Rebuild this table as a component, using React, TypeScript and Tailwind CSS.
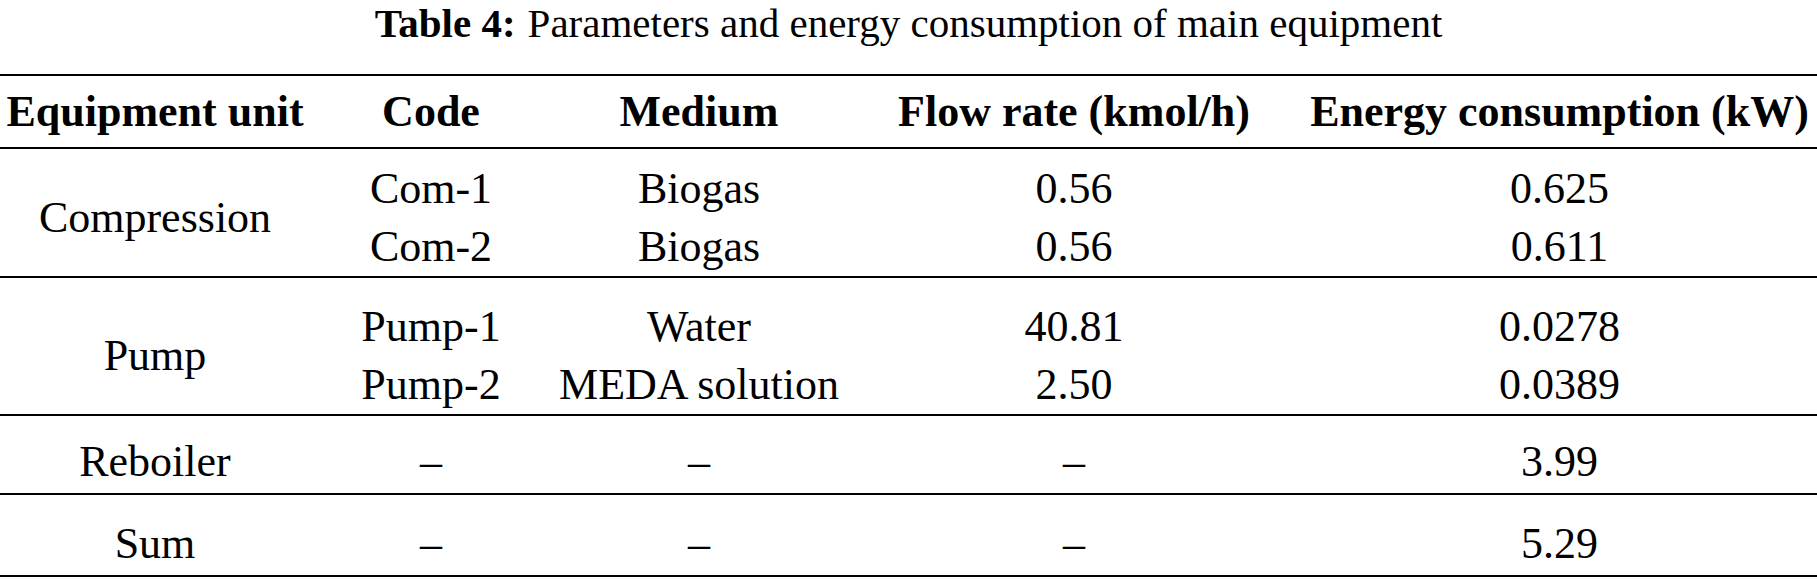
import React from 'react';

const grid = 'grid grid-cols-[310px_242px_294px_456px_515px]';

type Row = string[];

const Group: React.FC<{ label: string; rows: Row[]; pad: string }> = ({ label, rows, pad }) => (
  <div className={`${grid} border-b-2 border-black leading-[58px] ${pad}`}>
    <div className={`flex items-center justify-center ${rows.length > 1 ? 'row-span-2' : ''}`}>{label}</div>
    {rows.map((r, i) =>
      r.map((c, j) => (
        <div key={`${i}-${j}`} className="text-center whitespace-nowrap">
          {c}
        </div>
      ))
    )}
  </div>
);

export default function App() {
  return (
    <div className="h-[580px] w-[1817px] overflow-hidden bg-white text-black font-['Liberation_Serif',serif]">
      {/* caption */}
      <div className="h-[74px] text-center text-[41px] leading-[46px]">
        <span className="font-bold">Table 4:</span>
        <span className="ml-3">Parameters and energy consumption of main equipment</span>
      </div>

      <div className="border-t-2 border-black text-[44px]">
        <div className={`${grid} h-[73px] items-center border-b-2 border-black font-bold whitespace-nowrap`}>
          <div className="text-center">Equipment unit</div>
          <div className="text-center">Code</div>
          <div className="text-center">Medium</div>
          <div className="text-center">Flow rate (kmol/h)</div>
          <div className="text-center">Energy consumption (kW)</div>
        </div>

        <Group
          label="Compression"
          pad="pt-[11px] pb-0"
          rows={[
            ['Com-1', 'Biogas', '0.56', '0.625'],
            ['Com-2', 'Biogas', '0.56', '0.611'],
          ]}
        />
        <Group
          label="Pump"
          pad="pt-[20px] pb-0"
          rows={[
            ['Pump-1', 'Water', '40.81', '0.0278'],
            ['Pump-2', 'MEDA solution', '2.50', '0.0389'],
          ]}
        />
        <Group label="Reboiler" pad="pt-[17px] pb-[2px]" rows={[['–', '–', '–', '3.99']]} />
        <Group label="Sum" pad="pt-[20px] pb-[2px]" rows={[['–', '–', '–', '5.29']]} />
      </div>
    </div>
  );
}
